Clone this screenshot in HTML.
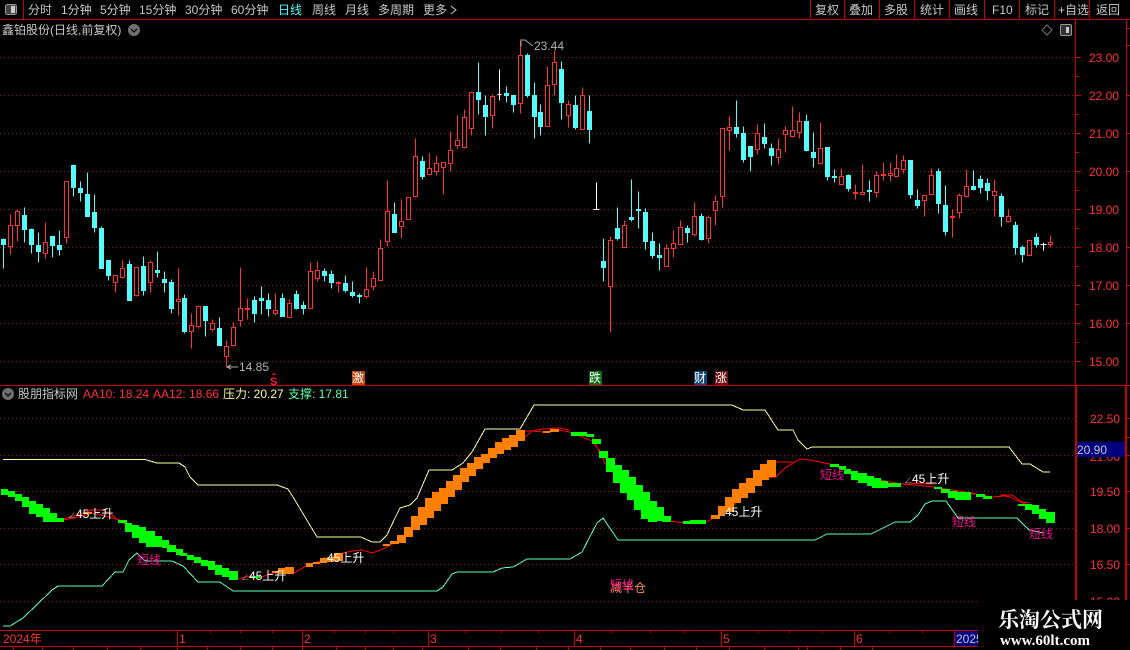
<!DOCTYPE html>
<html><head><meta charset="utf-8"><style>
html,body{margin:0;padding:0;background:#000;width:1130px;height:650px;overflow:hidden}
svg{display:block;position:absolute;left:0;top:0}
text{font-family:"Liberation Sans","WenQuanYi Zen Hei","Noto Sans CJK SC",sans-serif;font-size:12px}
.g{fill:#c8c8c8}.r{fill:#ff3232}.pk{fill:#f0108c;font-size:12px}.w{fill:#fff;font-size:12px}
.w tspan{font-size:8px;fill:#aaa}
</style></head><body>
<svg width="1130" height="650" viewBox="0 0 1130 650">
<!-- dotted grids -->
<g stroke="#901818" stroke-width="1" stroke-dasharray="1 3" shape-rendering="crispEdges">
<path d="M0 57.5H1075M0 95.5H1075M0 133.5H1075M0 171.5H1075M0 209.5H1075M0 247.5H1075M0 285.5H1075M0 323.5H1075M0 361.5H1075"/>
<path d="M0 418.5H1075M0 455.5H1075M0 491.5H1075M0 528.5H1075M0 564.5H1075M0 601.5H978"/>
</g>
<!-- frame lines -->
<g stroke="#c80000" stroke-width="1" fill="none" shape-rendering="crispEdges">
<path d="M0 19.5H1130M23.5 0V19M810.5 0V19M844.5 0V19M879.5 0V19M914.5 0V19M949.5 0V19M984.5 0V19M1019.5 0V19M1054.5 0V19M1089.5 0V19"/>
<path d="M0 385.5H1130M1075.5 19V385M1126.5 19V385"/>
<path d="M1075 57.5H1081M1075 76.5H1079M1075 95.5H1081M1075 114.5H1079M1075 133.5H1081M1075 152.5H1079M1075 171.5H1081M1075 190.5H1079M1075 209.5H1081M1075 228.5H1079M1075 247.5H1081M1075 266.5H1079M1075 285.5H1081M1075 304.5H1079M1075 323.5H1081M1075 342.5H1079M1075 361.5H1081"/>
<path d="M1126 28.5H1130M1126 45.5H1130M1126 95.5H1130M1126 133.5H1130M1126 171.5H1130M1126 247.5H1130M1126 285.5H1130M1126 323.5H1130"/>
<path d="M0 630.5H978M0 646.5H978M177.5 630V646M302.5 630V646M428.5 630V646M574.5 630V646M721.5 630V646M854.5 630V646M954.5 630V646"/>
<path d="M210.5 630V633M240.5 630V633M272.5 630V633M334.5 630V633M365.5 630V633M393.5 630V633M465.5 630V633M501.5 630V633M538.5 630V633M611.5 630V633M650.5 630V633M684.5 630V633M758.5 630V633M789.5 630V633M822.5 630V633M889.5 630V633M922.5 630V633"/>
<path d="M13.5 647V650M42.5 647V650M73.5 647V650M107.5 647V650M140.5 647V650M177.5 647V650M207.5 647V650M240.5 647V650M272.5 647V650M302.5 647V650M336.5 647V650M365.5 647V650M393.5 647V650M422.5 647V650M468.5 647V650M500.5 647V650M536.5 647V650M568.5 647V650M600.5 647V650M630.5 647V650M664.5 647V650M696.5 647V650M729.5 647V650M764.5 647V650M798.5 647V650M807.5 647V650M840.5 647V650M872.5 647V650"/>
</g>
<path d="M1075 385V630H1077V385zM1125 385V600H1127V385z" fill="#c80000" shape-rendering="crispEdges"/>
<path d="M1125 418.5H1130M1125 437.5H1130M1125 455.5H1130M1125 491.5H1130M1125 528.5H1130M1125 564.5H1130" stroke="#c80000" shape-rendering="crispEdges"/>

<!-- candles -->
<g transform="translate(.5 .5)" shape-rendering="crispEdges" stroke-width="1">
<path fill="none" stroke="#ff3232" d="M10 214V254M17 209V241M45 222V258M66 181V243M115 275V292M122 260V278M136 267V296M150 260V292M178 268V315M191 313V348M198 306V328M212 319V331M226 340V367M233 322V346M240 267V326M247 298V319M275 293V315M289 299V317M310 262V308M317 261V281M338 281V292M366 267V298M373 271V290M380 239V280M387 180V246M401 199V238M408 197V219M415 138V197M429 153V175M436 155V175M443 162V194M450 131V171M457 115V148M464 109V148M471 92V135M492 94V128M520 39V113M547 66V126M554 50V95M568 100V127M582 87V129M610 236V332M624 220V247M666 244V266M673 230V257M680 220V244M694 202V236M708 215V243M715 195V225M722 128V207M729 116V150M757 124V154M778 138V164M785 126V152M792 106V137M799 112V138M820 122V163M841 168V184M855 184V199M862 164V194M876 171V197M883 162V180M890 162V181M896 154V176M903 155V173M924 195V216M931 168V194M952 209V237M959 193V218M966 169V197M994 179V216M1008 209V222M1029 239V255M1050 235V247"/>
<path fill="#000" stroke="#ff3232" d="M8 225h4V246h-4zM15 211h4V225h-4zM43 242h4V253h-4zM64 181h4V237h-4zM113 275h4V282h-4zM120 268h4V277h-4zM134 267h4V295h-4zM148 262h4V282h-4zM176 299h4V301h-4zM189 325h4V331h-4zM196 306h4V326h-4zM210 323h4V329h-4zM224 346h4V356h-4zM231 327h4V345h-4zM238 308h4V320h-4zM245 308h4V309h-4zM273 310h4V313h-4zM287 303h4V317h-4zM308 271h4V308h-4zM315 270h4V278h-4zM336 282h4V283h-4zM364 289h4V296h-4zM371 278h4V286h-4zM378 248h4V280h-4zM385 211h4V241h-4zM399 221h4V226h-4zM406 197h4V219h-4zM413 156h4V196h-4zM427 168h4V174h-4zM434 163h4V171h-4zM441 162h4V167h-4zM448 150h4V163h-4zM455 140h4V145h-4zM462 117h4V147h-4zM469 92h4V128h-4zM490 96h4V115h-4zM518 55h4V103h-4zM545 85h4V126h-4zM552 62h4V84h-4zM566 104h4V115h-4zM580 95h4V129h-4zM608 240h4V286h-4zM622 225h4V247h-4zM664 248h4V266h-4zM671 243h4V248h-4zM678 227h4V244h-4zM692 216h4V234h-4zM706 217h4V238h-4zM713 201h4V210h-4zM720 128h4V196h-4zM727 127h4V130h-4zM755 133h4V149h-4zM776 149h4V157h-4zM783 130h4V134h-4zM790 130h4V136h-4zM797 121h4V132h-4zM818 148h4V163h-4zM839 176h4V184h-4zM853 192h4V193h-4zM860 192h4V194h-4zM874 175h4V192h-4zM881 174h4V175h-4zM888 173h4V175h-4zM894 168h4V176h-4zM901 160h4V169h-4zM922 195h4V200h-4zM929 175h4V194h-4zM950 216h4V217h-4zM957 195h4V212h-4zM964 186h4V196h-4zM992 191h4V195h-4zM1006 216h4V221h-4zM1027 240h4V255h-4zM1048 242h4V244h-4z"/>
<path fill="none" stroke="#54fcfc" d="M3 238V268M24 207V242M31 228V253M38 232V262M52 236V257M59 230V255M73 164V196M80 181V201M87 172V216M94 194V232M101 226V268M108 260V280M129 260V300M143 256V295M157 251V277M164 271V292M171 279V313M184 294V333M205 306V336M219 317V345M254 296V322M261 286V314M268 293V316M282 293V316M296 290V309M303 301V314M324 268V281M331 270V288M345 275V292M352 281V297M359 293V303M394 202V232M422 156V179M478 62V114M485 95V135M506 86V102M513 95V112M527 53V97M534 82V138M540 104V135M561 61V119M575 95V129M589 95V143M603 238V281M617 207V240M631 179V221M638 191V228M645 208V249M652 232V258M659 243V270M687 225V242M701 213V240M736 100V137M743 126V162M750 146V171M764 123V148M771 143V165M806 114V151M813 132V167M827 147V180M834 169V182M848 174V191M869 180V201M910 160V198M917 189V208M938 168V213M945 185V235M973 170V190M980 175V193M987 178V200M1001 193V226M1015 221V254M1022 245V262M1036 233V247"/>
<path fill="#54fcfc" stroke="#54fcfc" d="M1 239h4V244h-4zM22 215h4V229h-4zM29 229h4V244h-4zM36 245h4V251h-4zM50 236h4V245h-4zM57 245h4V249h-4zM71 165h4V187h-4zM78 188h4V192h-4zM85 194h4V216h-4zM92 212h4V227h-4zM99 228h4V268h-4zM106 260h4V275h-4zM127 264h4V300h-4zM141 266h4V290h-4zM155 270h4V272h-4zM162 279h4V282h-4zM169 282h4V308h-4zM182 298h4V331h-4zM203 306h4V320h-4zM217 328h4V345h-4zM252 300h4V313h-4zM259 298h4V300h-4zM266 300h4V308h-4zM280 298h4V316h-4zM294 294h4V308h-4zM301 305h4V308h-4zM322 271h4V275h-4zM329 274h4V282h-4zM343 283h4V290h-4zM350 292h4V295h-4zM357 295h4V296h-4zM392 214h4V232h-4zM420 161h4V176h-4zM476 92h4V99h-4zM483 105h4V116h-4zM504 93h4V95h-4zM511 95h4V104h-4zM525 55h4V95h-4zM532 95h4V116h-4zM538 112h4V126h-4zM559 69h4V102h-4zM573 105h4V127h-4zM587 111h4V129h-4zM601 261h4V267h-4zM615 228h4V238h-4zM629 217h4V219h-4zM636 209h4V210h-4zM643 212h4V241h-4zM650 241h4V255h-4zM657 255h4V257h-4zM685 228h4V232h-4zM699 216h4V239h-4zM734 127h4V133h-4zM741 133h4V159h-4zM748 146h4V156h-4zM762 137h4V143h-4zM769 148h4V155h-4zM804 121h4V150h-4zM811 152h4V157h-4zM825 147h4V176h-4zM832 176h4V177h-4zM846 175h4V188h-4zM867 190h4V191h-4zM908 160h4V194h-4zM915 200h4V205h-4zM936 171h4V203h-4zM943 205h4V231h-4zM971 186h4V189h-4zM978 179h4V187h-4zM985 183h4V190h-4zM999 196h4V216h-4zM1013 225h4V247h-4zM1020 247h4V254h-4zM1034 237h4V244h-4z"/>
<path fill="none" stroke="#fff" d="M499 69V100M497 94H501M596 182V209M593 209H599M1043 242V250M1040 244H1046"/>
</g>

<!-- indicator lines -->
<g fill="none" stroke-width="1" shape-rendering="crispEdges">
<path stroke="#ffffa0" d="M3 459.5H145L157 463H179L185 467L190 477L198 485H277L288 489L293 497L302 512L317 537H361L372 542H380L387 535L395 518L400 508L410 505L417 498L429 470H452L463 463L472 452L485 429H520L534 405H732L743 410H765L778 430H793L798 440L807 449L812 447H1009L1022 464H1030L1043 472H1050"/>
<path stroke="#60ffc0" d="M3 626H10L23 618L52 590L58 586H102L115 572H123L129 560L137 553L145 561H172L183 566L198 582H220L233 591H437L443 587L452 574L457 572H493L502 568L513 567L527 559H570L582 552L597 523L603 518L618 540H815L827 534H871L895 522H910L918 515L925 504L932 501H946L958 518H1017L1029 530L1043 533"/>
<path stroke="#ff0000" d="M57 521L70 517L80 514L92 510L103 510L112 515L118 520M64 520L78 517L92 513L105 516L120 520L128 527L146 539L169 544L187 555L215 570L238 579L250 576L262 577L272 573L294 573L306 566L343 553L352 551L362 550L372 553L383 549L400 540L406 532L420 523L434 508L448 496L462 482L476 470L490 458L504 448L518 441L525 437L532 431L543 432L559 430L570 432L592 441L603 455L620 480L640 500L657 519L671 521L685 523L706 522L720 515L734 505L748 490L762 478L776 477L785 468L793 463L800 459L810 460L830 464L860 476L901 484L915 485L934 487L971 493L976 494L992 497L1005 496L1010 497L1020 502L1030 506L1050 516"/>
<path stroke="#ff0000" d="M525 431L532 431L543 429L559 428L570 430M776 462H793M962 494H976M1000 495L1012 495L1022 502L1030 503M905 483L933 484M592 437L606 465"/>
</g>

<!-- bands -->
<path fill="#00ff00" shape-rendering="crispEdges" d="M1 489H8V495H1zM8 491H15V497H8zM15 494H22V501H15zM22 497H29V507H22zM29 501H36V514H29zM36 504H43V517H36zM43 508H50V522H43zM50 513H57V522H50zM57 518H64V522H57zM118 520H127V523H118zM125 523H132V532H125zM132 525H139V538H132zM139 527H146V543H139zM146 531H155V547H146zM155 536H162V547H155zM162 540H169V548H162zM167 545H176V552H167zM176 549H183V555H176zM180 553H187V556H180zM187 555H194V560H187zM194 557H201V563H194zM201 560H208V566H201zM208 561H215V570H208zM215 565H222V575H215zM222 568H229V577H222zM229 571H238V580H229zM250 576H260V578H250zM571 432H587V436H571zM586 434H594V437H586zM592 439H601V444H592zM599 451H608V458H599zM606 458H615V472H606zM613 465H622V483H613zM620 470H629V493H620zM627 477H636V500H627zM634 485H643V510H634zM641 492H650V519H641zM648 501H657V522H648zM657 507H664V521H657zM662 516H671V522H662zM683 521H690V524H683zM690 520H706V524H690zM830 464H839V467H830zM839 466H846V470H839zM844 469H851V474H844zM851 471H858V480H851zM858 473H867V483H858zM867 476H874V486H867zM872 478H881V488H872zM881 481H888V488H881zM888 483H901V487H888zM934 487H942V489H934zM941 489H950V493H941zM948 491H957V498H948zM955 492H971V500H955zM976 494H985V497H976zM983 496H992V499H983zM1018 504H1025V506H1018zM1025 504H1032V510H1025zM1032 505H1039V514H1032zM1039 509H1046V519H1039zM1046 512H1055V523H1046z"/>
<path fill="#ff8000" shape-rendering="crispEdges" d="M84 512H92V514H84zM272 571H278V573H272zM278 568H285V574H278zM285 567H294V574H285zM306 563H313V567H306zM313 562H320V564H313zM320 558H327V563H320zM327 557H334V562H327zM334 553H343V561H334zM383 544H390V546H383zM390 541H399V544H390zM397 535H406V543H397zM404 527H413V537H404zM411 516H420V530H411zM418 507H427V525H418zM425 498H434V518H425zM432 492H441V511H432zM439 488H448V504H439zM446 481H455V497H446zM453 475H462V490H453zM460 468H469V482H460zM467 463H476V476H467zM474 457H483V469H474zM481 454H490V463H481zM488 448H497V458H488zM495 442H504V454H495zM502 438H511V450H502zM509 435H518V447H509zM516 430H525V441H516zM543 431H550V433H543zM550 429H559V432H550zM711 515H720V519H711zM718 506H725V516H718zM725 497H734V512H725zM732 489H741V503H732zM739 483H748V498H739zM746 478H755V493H746zM753 470H762V486H753zM760 464H769V480H760zM767 460H776V477H767z"/>

<!-- annotation text -->
<g>
<text x="610" y="592" style="font-size:12px;fill:#ff9050">减半仓</text>
<text x="610" y="589" class="pk">短线</text>
<text x="137" y="564" class="pk">短线</text>
<text x="820" y="479" class="pk">短线</text>
<text x="952" y="526" class="pk">短线</text>
<text x="1029" y="538" class="pk">短线</text>
<text x="68" y="518" class="w"><tspan>∠</tspan>45上升</text>
<text x="241" y="580" class="w"><tspan>∠</tspan>45上升</text>
<text x="319" y="562" class="w"><tspan>∠</tspan>45上升</text>
<text x="717" y="516" class="w"><tspan>∠</tspan>45上升</text>
<text x="904" y="483" class="w"><tspan>∠</tspan>45上升</text>
</g>

<!-- axis labels -->
<g class="r" text-anchor="start">
<text class="r" x="1089" y="62">23.00</text><text class="r" x="1089" y="100">22.00</text><text class="r" x="1089" y="138">21.00</text><text class="r" x="1089" y="176">20.00</text><text class="r" x="1089" y="214">19.00</text><text class="r" x="1089" y="252">18.00</text><text class="r" x="1089" y="290">17.00</text><text class="r" x="1089" y="328">16.00</text><text class="r" x="1089" y="366">15.00</text>
<text class="r" x="1090" y="423">22.50</text><text class="r" x="1090" y="461">21.00</text><text class="r" x="1090" y="496">19.50</text><text class="r" x="1090" y="533">18.00</text><text class="r" x="1090" y="569">16.50</text><text class="r" x="1090" y="606">15.00</text>
</g>
<rect x="1077" y="442" width="48" height="15" fill="#000080"/>
<text x="1077" y="454" fill="#c8c8c8">20.90</text>

<!-- bottom axis -->
<text x="3" y="643" class="r">2024年</text>
<text x="179" y="643" class="r">1</text><text x="304" y="643" class="r">2</text><text x="430" y="643" class="r">3</text><text x="576" y="643" class="r">4</text><text x="723" y="643" class="r">5</text><text x="856" y="643" class="r">6</text>
<rect x="955" y="631" width="23" height="15" fill="#000080"/>
<text x="956" y="643" fill="#c8c8c8">2025</text>

<!-- toolbar -->
<rect x="5.5" y="4.5" width="11" height="10" rx="2" fill="#444" stroke="#999"/><rect x="11" y="6" width="4" height="7" fill="#ccc"/>
<g class="g">
<text class="g" x="28" y="14">分时</text><text class="g" x="61" y="14">1分钟</text><text class="g" x="100" y="14">5分钟</text><text class="g" x="139" y="14">15分钟</text><text class="g" x="185" y="14">30分钟</text><text class="g" x="231" y="14">60分钟</text><text x="278" y="14" fill="#54fcfc">日线</text><text class="g" x="312" y="14">周线</text><text class="g" x="345" y="14">月线</text><text class="g" x="378" y="14">多周期</text><text class="g" x="423" y="14">更多</text>
<text class="g" x="815" y="14">复权</text><text class="g" x="849" y="14">叠加</text><text class="g" x="884" y="14">多股</text><text class="g" x="920" y="14">统计</text><text class="g" x="954" y="14">画线</text><text class="g" x="992" y="14">F10</text><text class="g" x="1025" y="14">标记</text><text class="g" x="1058" y="14">+自选</text><text class="g" x="1096" y="14">返回</text>
</g>
<path d="M451 6L456 10L451 14" fill="none" stroke="#c8c8c8"/>
<text x="2" y="34" class="g">鑫铂股份(日线,前复权)</text>
<circle cx="134" cy="30" r="6" fill="#707070"/><path d="M131 29L134 32L137 29" stroke="#111" stroke-width="1.5" fill="none"/>
<path d="M1048 25L1053 30L1048 35L1043 30Z" fill="none" stroke="#777" transform="translate(-1 0)"/>
<rect x="1060.5" y="24.5" width="11" height="11" rx="1.5" fill="#333" stroke="#999"/><rect x="1066" y="27" width="3" height="6" fill="#ccc"/>

<!-- high/low markers -->
<path d="M521 40H525L533 46M521 41V46" fill="none" stroke="#aaa"/>
<text x="534" y="50" fill="#b4b4b4">23.44</text>
<path d="M227 367H238M227 367L231 365M227 367L231 369" fill="none" stroke="#aaa"/>
<text x="239" y="371" fill="#b4b4b4">14.85</text>

<!-- signal boxes -->
<path d="M274 373L272 375H276Z" fill="#ff2020"/><text x="270" y="385" style="font-size:11px;font-weight:bold" fill="#ff2020">S</text>
<rect x="352" y="371" width="13" height="14" fill="#c04810"/><text x="352" y="382" fill="#fff">激</text>
<rect x="589" y="371" width="13" height="14" fill="#0c6c14"/><text x="589" y="382" fill="#fff">跌</text>
<rect x="694" y="371" width="13" height="14" fill="#104878"/><text x="694" y="382" fill="#fff">财</text>
<rect x="715" y="371" width="13" height="14" fill="#701010"/><text x="715" y="382" fill="#fff">涨</text>

<!-- indicator header -->
<circle cx="8" cy="394" r="6" fill="#707070"/><path d="M5 393L8 396L11 393" stroke="#111" stroke-width="1.5" fill="none"/>
<text x="18" y="398" class="g">股朋指标网</text>
<text x="83" y="398" class="r">AA10: 18.24</text>
<text x="153" y="398" class="r">AA12: 18.66</text>
<text x="223" y="398" fill="#ffffa0">压力: 20.27</text>
<text x="288" y="398" fill="#60ffb0">支撑: 17.81</text>

<!-- watermark -->
<rect x="978" y="600" width="152" height="50" fill="#000"/>
<text x="998" y="627" style="font-family:'Liberation Serif','Noto Serif CJK SC',serif;font-size:21px;font-weight:bold" fill="#fff">乐淘公式网</text>
<text x="1000" y="645" style="font-family:'Liberation Serif',serif;font-size:15px;font-weight:bold" fill="#fff">www.60lt.com</text>
</svg>
</body></html>
